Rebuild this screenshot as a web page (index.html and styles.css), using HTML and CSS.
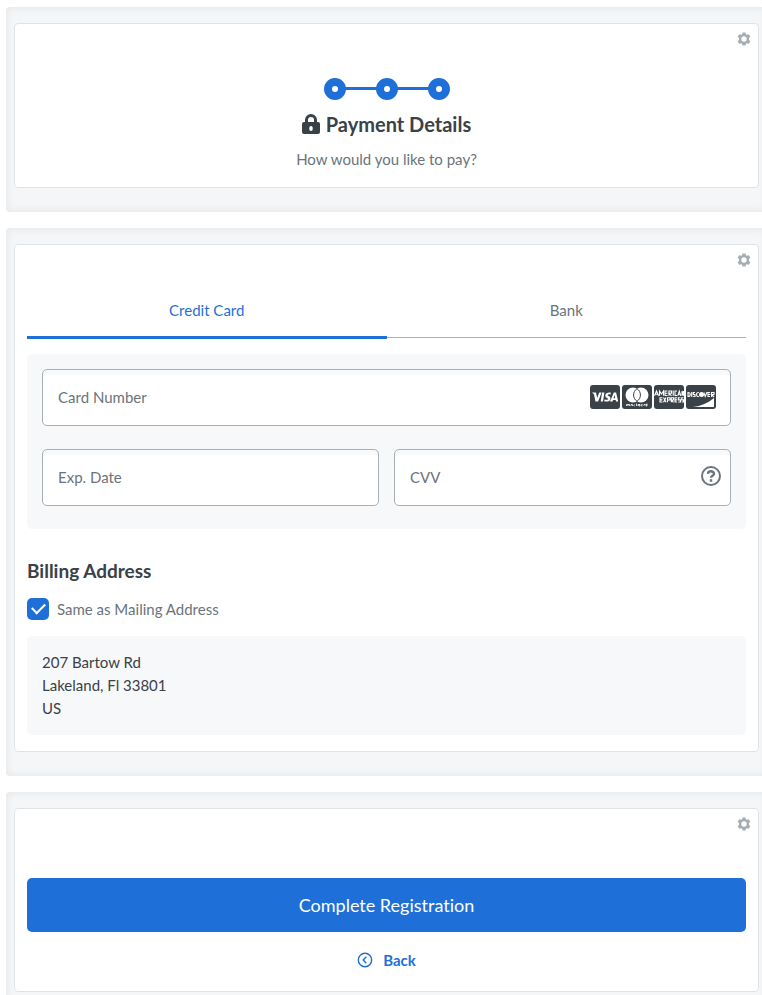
FILE: index.html
```html
<!DOCTYPE html>
<html lang="en">
<head>
<meta charset="utf-8">
<meta name="viewport" content="width=device-width, initial-scale=1">
<title>Payment Details</title>
<link rel="stylesheet" href="styles.css">
</head>
<body>
<svg class="defs" aria-hidden="true">
  <symbol id="gear" viewBox="0 0 14 14">
    <path fill-rule="evenodd" d="M5.500.4h3l.4 1.800 1 .6 1.900-.6 1.500 2.600L12 6.100v1.800l1.300 1.300-1.500 2.600-1.900-.6-1 .6-.4 1.800h-3l-.4-1.800-1-.6-1.900.6L.7 9.200 2 7.900V6.100L.7 4.800l1.500-2.600 1.900.6 1-.6zM7 4.300a2.700 2.700 0 1 0 0 5.400 2.700 2.700 0 0 0 0-5.400z"/>
  </symbol>
</svg>
<main class="page">
  <section class="block">
    <div class="card card-intro">
      <button class="settings" type="button" aria-label="Section settings"><svg><use href="#gear"/></svg></button>
      <ol class="steps" aria-label="Step 3 of 3"><li></li><li></li><li></li></ol>
      <h1 class="title">
        <svg class="lock" viewBox="0 0 18 20" aria-hidden="true"><path fill-rule="evenodd" d="M3 8V6a6 6 0 0 1 12 0v2h1a2 2 0 0 1 2 2v8a2 2 0 0 1-2 2H2a2 2 0 0 1-2-2v-8a2 2 0 0 1 2-2zm3 0h6V6a3 3 0 0 0-6 0zm3 4a1.700 1.700 0 0 0-1.700 1.700v1.600a1.700 1.700 0 0 0 3.400 0v-1.600A1.700 1.700 0 0 0 9 12z"/></svg>
        Payment Details
      </h1>
      <p class="subtitle">How would you like to pay?</p>
    </div>
  </section>

  <section class="block">
    <div class="card card-payment">
      <button class="settings" type="button" aria-label="Section settings"><svg><use href="#gear"/></svg></button>
      <div class="tabs" role="tablist">
        <button class="tab tab-active" type="button" role="tab" aria-selected="true">Credit Card</button>
        <button class="tab" type="button" role="tab" aria-selected="false">Bank</button>
      </div>
      <div class="panel fields">
        <div class="field field-wide">
          <input type="text" placeholder="Card Number" aria-label="Card Number">
          <span class="brands" aria-hidden="true">
            <svg viewBox="0 0 30 24"><rect class="dark" width="30" height="24" rx="3"/><path class="light" d="M2 7.500h4l1.200 5.500L9.200 7.500h2.400L8.100 16.500H5.500L3.900 9.200zM12.100 7.500h2.300L13 16.500h-2.300zM20.800 7.700l-.3 2c-1.300-.6-2.900-.5-2.900.2 0 .9 2.900 1.200 2.900 3.500 0 2.900-3.600 3.700-6.300 2.800l.4-2c1.500.8 3.500.6 3.500-.2 0-.9-2.800-1.200-2.800-3.500 0-2.500 3.100-3.500 5.500-2.800zM23.800 7.500h2.300l2.100 9H26l-.3-1.500h-2.600l-.7 1.500H20zm.7 2.600-1 3.200h1.700z"/></svg>
            <svg viewBox="0 0 30 24"><rect class="dark" width="30" height="24" rx="3"/><circle class="light" cx="11" cy="10" r="7.500"/><circle class="light" cx="19" cy="10" r="7.500"/><path class="outline" d="M15 3.700a7.500 7.500 0 0 1 0 12.600 7.500 7.500 0 0 1 0-12.600z"/><path class="lettering" d="M4.500 21v-1.500h1.500V21m0-1.500h1.500V21m1.500 0v-1.500h1.500V21m2 0c-2 0 1-1.500-.5-1.500m2.500-1V21m1.500 0v-1.500h1.500M18 21h-1v-1.500h1V21m2.500-1.500h-1V21h1m1.500 0v-1.500h1.500m1.500 0h-1V21h1v-2.500"/></svg>
            <svg viewBox="0 0 30 24"><rect class="dark" width="30" height="24" rx="3"/><path class="lettering-bold" d="M.5 10.800 2.500 6l2 4.800M1.500 9.300h2M5.500 10.800V6l2 3 2-3v4.800M13.500 6H11v4.500h2.500M11 8.300h2.500M15 10.800V6h2.500v2.300H15l2.500 2.500M19.200 5.500v5.300M23 6h-2v4.500h2M23.800 10.800 25.300 6l1.500 4.800m-2.500-1.500h2M28 10.800V6l1.500 4.800V6M8.500 12.800H6V17h2.500M6 14.900h2.500M9.500 12.500l2.500 4.800m0-4.800-2.500 4.800M13.500 17.300v-4.500H16v2.200h-2.500M17.300 17.300v-4.500h2.200v2.200h-2.200l2.200 2.300M23 12.800h-2V17h2m-2-2.100h2M26.500 12.800H24.300v2.100h2.200V17h-2.200M29.500 12.800h-1.800v2.100h1.800V17h-1.800"/></svg>
            <svg viewBox="0 0 30 24"><rect class="dark" width="30" height="24" rx="3"/><path class="lettering-bold" d="M2 7.500v4c3 0 3-4 0-4zM5.700 7v5M9 7.500H7.300v2H9v2H7.200M12.800 7.500c-3-.5-3 4.500 0 4M17.900 7.500l1.300 4 1.900-4.500M24 7.500h-2v4h2m-2-2h2M25.500 12V7.500H28v2h-2.500L28 12"/><circle class="light" cx="15.500" cy="9.500" r="2.500"/><path class="light" d="M28 13v9H7c8-1 15-4 21-9z"/></svg>
          </span>
        </div>
        <div class="field"><input type="text" placeholder="Exp. Date" aria-label="Exp. Date"></div>
        <div class="field">
          <input type="text" placeholder="CVV" aria-label="CVV">
          <button class="help" type="button" aria-label="What is a CVV?"><svg viewBox="0 0 20 20"><circle cx="10" cy="10" r="9"/><path class="mark" d="M7 7.800C7 4.500 13 4.500 13 7.700c0 2-3 1.900-3 4M10 13.200v2.500"/></svg></button>
        </div>
      </div>
      <h2 class="heading">Billing Address</h2>
      <label class="check"><input type="checkbox" checked>Same as Mailing Address</label>
      <address class="panel address">207 Bartow Rd<br>Lakeland, Fl 33801<br>US</address>
    </div>
  </section>

  <section class="block block-last">
    <div class="card card-submit">
      <button class="settings" type="button" aria-label="Section settings"><svg><use href="#gear"/></svg></button>
      <button class="submit" type="submit">Complete Registration</button>
      <a class="back" href="#">
        <svg viewBox="0 0 16 16" aria-hidden="true"><circle cx="8" cy="8" r="6.700"/><path d="M9.300 4.800 6.200 8l3.100 3.200"/></svg>
        Back
      </a>
    </div>
  </section>
</main>
</body>
</html>
```

FILE: styles.css
```css
:root {
  --blue: #1f6fd9;
  --ink: #3a4147;
  --muted: #6a747c;
  --line: #a5b0b7;
  --edge: #dfe3e7;
  --panel: #f7f8fa;
}

* { box-sizing: border-box; }

body {
  margin: 0;
  background: #fff;
  color: var(--ink);
  font: 15px/24px Lato, "Liberation Sans", sans-serif;
  font-variant-ligatures: none;
}

button, input { font: inherit; color: inherit; font-variant-ligatures: none; }
button { padding: 0; border: 0; background: none; cursor: pointer; }
h1, h2, p, ol { margin: 0; padding: 0; }
.defs { display: none; }

.page {
  display: flex;
  flex-direction: column;
  gap: 16px;
  padding: 7px 0 0 6px;
  overflow: hidden;
}

.block {
  margin-right: -5px;
  padding: 16px 8px 24px;
  border-radius: 4px;
  background: #f5f6f8;
  box-shadow: inset 0 0 10px rgba(0, 0, 0, .08);
}
/* The last block runs on past the page's lower edge. */
.block-last { margin-bottom: -21px; }

.card {
  position: relative;
  display: flex;
  flex-direction: column;
  padding: 0 12px;
  border: 1px solid var(--edge);
  border-radius: 4px;
  background: #fff;
}
.card-intro { align-items: center; padding-top: 54px; padding-bottom: 16px; }
.card-payment { padding-top: 53px; padding-bottom: 16px; }
.card-submit { padding-top: 69px; padding-bottom: 19px; }

.settings { position: absolute; top: 8px; right: 7px; width: 14px; height: 14px; }
.settings svg { display: block; width: 14px; height: 14px; fill: #a5adb3; }

.steps { display: flex; gap: 30px; list-style: none; }
.steps li {
  position: relative;
  width: 22px;
  height: 22px;
  border: 8px solid var(--blue);
  border-radius: 50%;
}
.steps li + li::before {
  content: "";
  position: absolute;
  top: 1px;
  right: 13px;
  width: 32px;
  height: 3px;
  background: var(--blue);
}

.title {
  display: flex;
  align-items: center;
  gap: 6px;
  margin-top: 10px;
  font-size: 20px;
  line-height: 28px;
  font-weight: 700;
}
.lock { width: 18px; height: 20px; fill: var(--ink); }
.subtitle { margin-top: 9px; color: var(--muted); }

.tabs { display: flex; }
.tab {
  flex: 1;
  height: 41px;
  padding-bottom: 17px;
  color: var(--muted);
  background: linear-gradient(var(--line), var(--line)) 0 39px / 100% 1px no-repeat;
}
.tab-active { padding-bottom: 14px; border-bottom: 3px solid var(--blue); background: none; color: var(--blue); }

.panel { border-radius: 5px; background: var(--panel); }
.fields {
  display: grid;
  grid-template-columns: 1fr 1fr;
  gap: 23px 15px;
  margin-top: 15px;
  padding: 15px 15px 23px;
}
.field { position: relative; }
.field-wide { grid-column: 1 / -1; }
.field input {
  display: block;
  width: 100%;
  height: 57px;
  padding: 0 15px 2px;
  border: 1px solid var(--line);
  border-radius: 5px;
  background: #fff;
  box-shadow: inset 0 5px 0 #f8f9fa;
  outline: 0;
}
.field input::placeholder { color: var(--muted); opacity: 1; }
.brands { position: absolute; top: 16px; right: 15px; display: flex; gap: 2px; }
.brands svg { width: 30px; height: 24px; }
.dark { fill: var(--ink); }
.light { fill: #fff; }
.outline { fill: none; stroke: var(--ink); stroke-width: 1; }
.lettering { fill: none; stroke: #fff; stroke-width: .8; }
.lettering-bold { fill: none; stroke: #fff; stroke-width: 1.1; }
.help { position: absolute; top: 17px; right: 10px; width: 20px; height: 20px; }
.help svg { display: block; fill: none; stroke: var(--muted); stroke-width: 2; }
.help .mark { stroke-width: 2.4; }

.heading { margin-top: 30px; font-size: 19px; line-height: 24px; font-weight: 700; }
.check {
  display: flex;
  align-items: center;
  gap: 8px;
  height: 22px;
  margin-top: 15px;
  color: var(--muted);
}
.check input {
  display: grid;
  place-items: center;
  width: 22px;
  height: 22px;
  margin: 0;
  border-radius: 5px;
  background: var(--blue);
  appearance: none;
}
.check input::before {
  content: "";
  width: 11px;
  height: 6px;
  margin-bottom: 4px;
  border: solid #fff;
  border-width: 0 0 2px 2px;
  transform: rotate(-45deg);
}
.address { margin-top: 16px; padding: 15px; font-style: normal; line-height: 23px; }

.submit {
  height: 54px;
  border-radius: 5px;
  background: var(--blue);
  color: #fff;
  font-size: 18px;
}
.back {
  display: flex;
  align-items: center;
  align-self: center;
  gap: 10px;
  margin-top: 16px;
  color: var(--blue);
  font-weight: 700;
  text-decoration: none;
}
.back svg { width: 16px; height: 16px; fill: none; stroke: currentColor; stroke-width: 1.4; }
```
